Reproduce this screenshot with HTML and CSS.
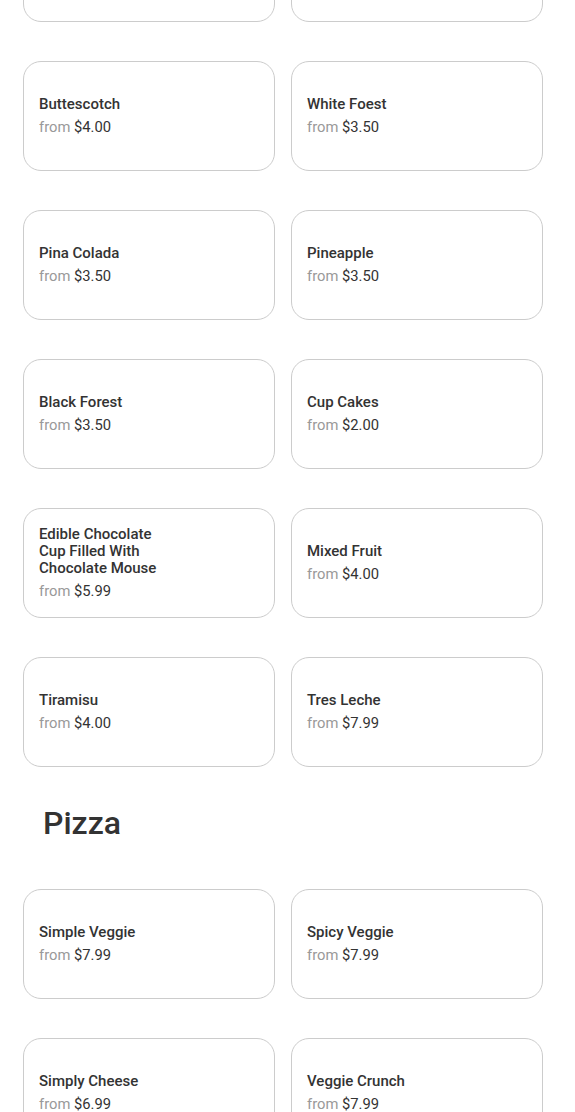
FILE: index.html
```html
<!DOCTYPE html>
<html lang="en">
<head>
    <meta charset="UTF-8">
    <meta name="viewport" content="width=device-width, initial-scale=1.0">
    <title>Menu</title>
    <link rel="stylesheet" href="styles.css">
</head>
<body>

    <div class="menu">
        <!-- Cakes (first row scrolled out of view) -->
        <div class="grid">
            <div class="card"></div>
            <div class="card"></div>

            <div class="card"><div class="name">Buttescotch</div><div class="price"><span class="from">from</span> $4.00</div></div>
            <div class="card"><div class="name">White Foest</div><div class="price"><span class="from">from</span> $3.50</div></div>

            <div class="card"><div class="name">Pina Colada</div><div class="price"><span class="from">from</span> $3.50</div></div>
            <div class="card"><div class="name">Pineapple</div><div class="price"><span class="from">from</span> $3.50</div></div>

            <div class="card"><div class="name">Black Forest</div><div class="price"><span class="from">from</span> $3.50</div></div>
            <div class="card"><div class="name">Cup Cakes</div><div class="price"><span class="from">from</span> $2.00</div></div>

            <div class="card"><div class="name">Edible Chocolate Cup Filled With Chocolate Mouse</div><div class="price"><span class="from">from</span> $5.99</div></div>
            <div class="card"><div class="name">Mixed Fruit</div><div class="price"><span class="from">from</span> $4.00</div></div>

            <div class="card"><div class="name">Tiramisu</div><div class="price"><span class="from">from</span> $4.00</div></div>
            <div class="card"><div class="name">Tres Leche</div><div class="price"><span class="from">from</span> $7.99</div></div>
        </div>

        <h2 class="section-title">Pizza</h2>

        <div class="grid">
            <div class="card"><div class="name">Simple Veggie</div><div class="price"><span class="from">from</span> $7.99</div></div>
            <div class="card"><div class="name">Spicy Veggie</div><div class="price"><span class="from">from</span> $7.99</div></div>

            <div class="card"><div class="name">Simply Cheese</div><div class="price"><span class="from">from</span> $6.99</div></div>
            <div class="card"><div class="name">Veggie Crunch</div><div class="price"><span class="from">from</span> $7.99</div></div>
        </div>
    </div>

</body>
</html>
```

FILE: styles.css
```css
body {
    margin: 0;
    background: #fff;
    font-family: Roboto, "Liberation Sans", sans-serif;
    color: #333;
}
.menu {
    margin-top: -88px; /* page is scrolled */
    padding: 0 32px 0 23px;
}
.grid {
    display: grid;
    grid-template-columns: 1fr 1fr;
    column-gap: 16px;
    row-gap: 39px;
}
.card {
    box-sizing: border-box;
    height: 110px;
    padding: 0 15px;
    border: 1px solid #ccc;
    border-radius: 18px;
    display: flex;
    flex-direction: column;
    justify-content: center;
}
.name {
    font-size: 15px;
    font-weight: 500;
    line-height: 17px;
    max-width: 130px;
    color: #333;
}
.price {
    margin-top: 6px;
    font-size: 14.75px;
    line-height: 17px;
    color: #333;
}
.from {
    color: #999;
}
.section-title {
    margin: 37px 0 47px 20px;
    font-size: 32px;
    font-weight: 500;
    line-height: 38px;
    color: #333;
}
```
